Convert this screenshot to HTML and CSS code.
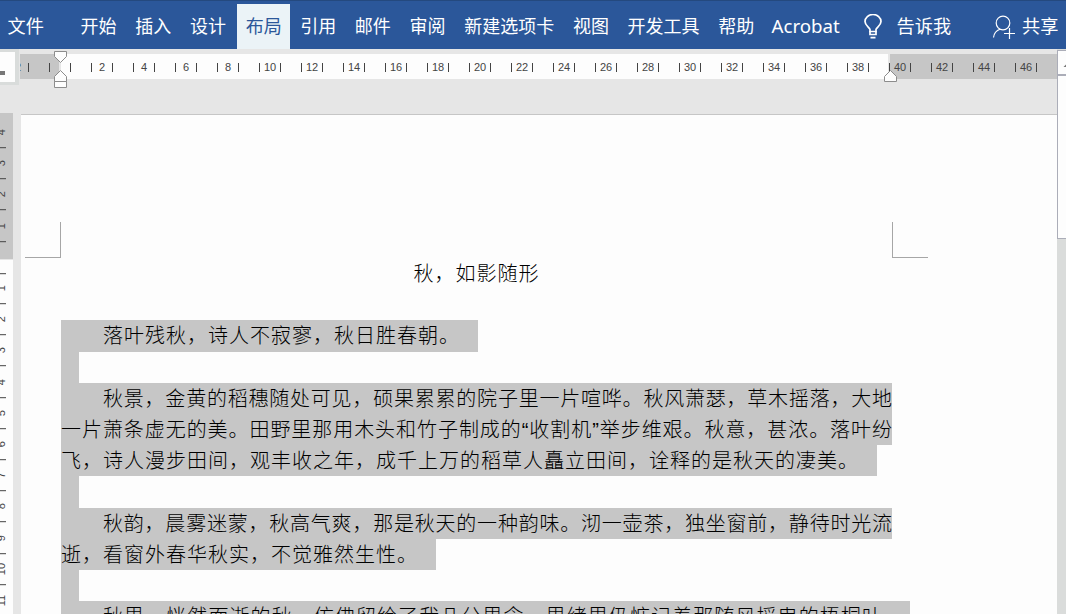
FILE: index.html
```html
<!DOCTYPE html>
<html lang="zh-CN">
<head>
	<meta charset="UTF-8">
	<title>秋，如影随形</title>
	<link rel="stylesheet" href="styles.css">
</head>
<body>
	<div class="menu">
		<span class="file">文件</span>
		<ul class="tabs">
			<li>开始</li>
			<li>插入</li>
			<li>设计</li>
			<li class="on">布局</li>
			<li>引用</li>
			<li>邮件</li>
			<li>审阅</li>
			<li>新建选项卡</li>
			<li>视图</li>
			<li>开发工具</li>
			<li>帮助</li>
			<li class="en">Acrobat</li>
		</ul>
		<div class="tell">
			<svg width="20" height="26" viewBox="0 0 20 26" fill="none" stroke="#fff" stroke-width="1.7">
				<path d="M7 17.5V15.5C6.5 13.5 2 11.5 2 7.500a8 7 0 0 1 16 0C18 11.500 13.500 13.500 13 15.500V17.500z"/>
				<path d="M7 17v3.500h6V17M7.500 23.700h5"/>
			</svg>
			<span>告诉我</span>
		</div>
		<div class="share">
			<svg width="24" height="24" viewBox="0 0 24 24" fill="none" stroke="#fff" stroke-width="1.200">
				<circle cx="11" cy="8" r="6.800"/>
				<path d="M1.500 22.500C2 18.500 4.500 15.500 8 14.300M12 18.500h11M17.500 13v11"/>
			</svg>
			<span>共享</span>
		</div>
	</div>
	<div class="main">
		<div class="left">
			<div class="tabstop"><i></i></div>
			<div class="vruler">
				<ul class="vtop">
					<li>4</li><li>3</li><li>2</li><li>1</li>
				</ul>
				<ul class="vbody">
					<li>1</li><li>2</li><li>3</li><li>4</li><li>5</li><li>6</li><li>7</li><li>8</li><li>9</li><li>10</li><li>11</li>
				</ul>
			</div>
		</div>
		<div class="center">
			<div class="ruler">
				<ul>
					<li>2</li><li></li><li>2</li><li>4</li><li>6</li><li>8</li><li>10</li><li>12</li><li>14</li><li>16</li><li>18</li><li>20</li><li>22</li><li>24</li><li>26</li><li>28</li><li>30</li><li>32</li><li>34</li><li>36</li><li>38</li><li>40</li><li>42</li><li>44</li><li>46</li>
				</ul>
			</div>
			<!-- 缩进滑块 -->
			<svg class="mark mark-l" width="14" height="38" viewBox="0 0 14 38" fill="#fdfdfd" stroke="#8c8c8c">
				<path d="M.5.5h12v5l-6 6-6-6zM.5 30.500v-5l6-6 6 6v5zM.5 30.500h12v6H.5z"/>
			</svg>
			<svg class="mark mark-r" width="14" height="13" viewBox="0 0 14 13" fill="#fdfdfd" stroke="#8c8c8c">
				<path d="M.5 11.500v-5l6-6 6 6v5z"/>
			</svg>
			<div class="page">
				<div class="corners"><i class="c1"></i><i class="c2"></i></div>
				<h1>秋，如影随形</h1>
				<div class="text">
					<p class="ind w1 tall">落叶残秋，诗人不寂寥，秋日胜春朝。</p>
					<p class="blank"></p>
					<p class="ind full">秋景，金黄的稻穗随处可见，硕果累累的院子里一片喧哗。秋风萧瑟，草木摇落，大地</p>
					<p class="full">一片萧条虚无的美。田野里那用木头和竹子制成的<b>“</b>收割机<b>”</b>举步维艰。秋意，甚浓。落叶纷</p>
					<p class="w2">飞，诗人漫步田间，观丰收之年，成千上万的稻草人矗立田间，诠释的是秋天的凄美。</p>
					<p class="blank tall"></p>
					<p class="ind full">秋韵，晨雾迷蒙，秋高气爽，那是秋天的一种韵味。沏一壶茶，独坐窗前，静待时光流</p>
					<p class="w3">逝，看窗外春华秋实，不觉雅然生性。</p>
					<p class="blank"></p>
					<p class="ind w4">秋思，恍然而逝的秋，仿佛留给了我几分思念，思绪里仍惦记着那随风摇曳的梧桐叶，</p>
				</div>
			</div>
		</div>
		<div class="scroll">
			<div class="up"><svg width="8" height="8" viewBox="0 0 8 8"><path d="M5.500 4l4-4 4 4z" fill="#777"/></svg></div>
			<div class="thumb"></div>
		</div>
	</div>
</body>
</html>
```
FILE: styles.css
```css
*{
	margin: 0;
	padding: 0;
	box-sizing: border-box;
}
body{
	width: 1066px;
	height: 614px;
	overflow: hidden;
	background: #e6e6e6;
	font-family: "Noto Sans CJK SC", sans-serif;
}
ul{
	list-style: none;
}
svg{
	display: block;
}
/* 菜单栏 */
.menu{
	height: 49px;
	background: #2b579a;
	border-top: 1px solid #24497f;
	display: flex;
	color: #fff;
	font-size: 18.2px;
	line-height: 43px;
	padding-left: 7.5px;
	padding-top: 3px;
	white-space: nowrap;
}
.file{
	width: 63px;
}
.tabs{
	display: flex;
	width: 780px;
	font-size: 18px;
}
.tabs li{
	padding: 0 9.35px;
}
.tabs li:first-child{
	margin-left: .7px;
}
.tabs .on{
	background: #ebf3f7;
	color: #2b579a;
	margin: 0 .8px 0 2px;
	padding: 0 8.4px;
}
.tabs .en{
	font-family: "Noto Sans", sans-serif;
	font-size: 18.7px;
	margin-left: -1.5px;
}
.tell,.share{
	display: flex;
}
.tell{
	width: 130px;
	padding-left: 12.5px;
}
.tell svg{
	margin: 10px 13.5px 0 0;
}
.share{
	padding-left: 11px;
}
.share svg{
	margin: 11px 6.5px 0 0;
}
.main{
	display: flex;
	height: 565px;
}
.left{
	width: 21px;
	flex: none;
}
.tabstop{
	width: 19px;
	height: 36px;
	background: #fdfdfd;
	border: solid #d9dcdb;
	border-width: 3px 4px 3px 0;
	padding-top: 19px;
}
.tabstop i{
	display: block;
	width: 5px;
	height: 4px;
	background: #777;
}
/* 垂直标尺 */
.vruler{
	margin-top: 28px;
	width: 13px;
	height: 501px;
	background: #fdfdfd;
	overflow: hidden;
}
.vtop{
	height: 147px;
	background: #c6c6c6;
	border-bottom: 1px solid #e6e6e6;
	padding-top: 4px;
}
.vbody{
	padding-top: 13px;
}
.vruler li{
	height: 31.2px;
	width: 6px;
	padding-left: 4px;
	display: flex;
	align-items: center;
	justify-content: center;
	writing-mode: vertical-rl;
	transform: rotate(180deg);
	border-top: 1px solid #444;
	font: 11px/12px "Liberation Sans", sans-serif;
	color: #444;
}
.vbody li:first-child{
	border-bottom: 1px solid #444;
}
.center{
	width: 1036px;
	flex: none;
	position: relative;
}
/* 水平标尺 */
.ruler{
	margin: 5px 0 35px -1px;
	height: 25px;
	overflow: hidden;
	background: linear-gradient(90deg, #c6c6c6 39px, #e6e6e6 39px, #e6e6e6 41px, #fdfdfd 41px, #fdfdfd 868px, #e6e6e6 868px, #e6e6e6 870px, #c6c6c6 870px);
}
.ruler ul{
	display: flex;
	margin-left: -23px;
	padding-top: 9px;
}
.ruler li{
	flex: none;
	width: 22px;
	height: 9px;
	margin: 0 10px;
	border: solid #444;
	border-width: 0 1px;
	text-align: center;
	font: 11px/9px "Liberation Sans", sans-serif;
	color: #444;
}
.mark{
	position: absolute;
}
.mark-l{
	left: 33px;
	top: 2px;
}
.mark-r{
	left: 863px;
	top: 21px;
}
/* 页面 */
.page{
	height: 500px;
	background: #fdfdfd;
	border-top: 1px solid #c6c6c6;
	overflow: hidden;
	padding-top: 107px;
	color: #000;
}
.corners{
	display: flex;
	justify-content: space-between;
	width: 903px;
	margin-left: 4px;
}
.corners i{
	width: 36px;
	height: 36px;
	border-bottom: 1px solid #a6a6a6;
}
.corners .c1{
	border-right: 1px solid #a6a6a6;
}
.corners .c2{
	border-left: 1px solid #a6a6a6;
}
h1,.text p{
	font-size: 20px;
	font-weight: 300;
	letter-spacing: 1px;
	line-height: 29px;
	white-space: nowrap;
}
h1{
	width: 831px;
	margin-left: 40px;
	text-align: center;
	height: 62px;
}
.text{
	margin-left: 40px;
}
.text p{
	height: 31px;
	background: #c6c6c6;
}
.text .tall{
	height: 32px;
}
.text .ind{
	padding-left: 42px;
}
.text .blank{
	width: 18px;
}
.text .full{
	width: 831px;
	letter-spacing: 0;
	white-space: normal;
	text-align: justify;
	text-align-last: justify;
}
.text b{
	font-family: "Liberation Sans", sans-serif;
	font-weight: normal;
}
.text .w1{
	width: 417px;
}
.text .w2{
	width: 816px;
}
.text .w3{
	width: 375px;
}
.text .w4{
	width: 849px;
	letter-spacing: 1.08px;
}
/* 滚动条 */
.scroll{
	width: 9px;
	background: #dadcdb;
	padding-top: 1px;
}
.up,.thumb{
	background: #fdfdfd;
	border: 1px solid #abadb8;
	border-right: none;
}
.up{
	height: 25px;
	overflow: hidden;
	padding-top: 12px;
}
.thumb{
	height: 164px;
}
```
